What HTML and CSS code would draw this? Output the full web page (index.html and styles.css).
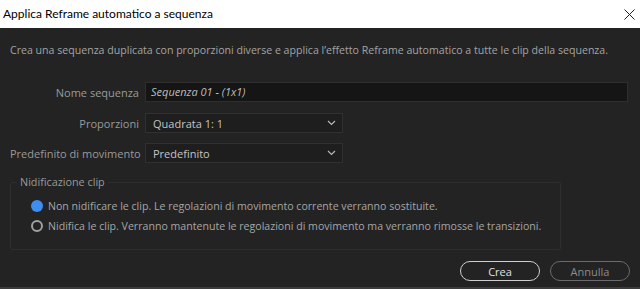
FILE: index.html
```html
<!DOCTYPE html>
<html lang="it">
<head>
<meta charset="utf-8">
<link rel="stylesheet" href="styles.css">
</head>
<body>
<div class="window">
  <div class="titlebar">
    <span class="title">Applica Reframe automatico a sequenza</span>
    <svg class="close" width="11" height="11" viewBox="0 0 11 11"><path d="M0.5 0.5 L10.5 10.5 M10.5 0.5 L0.5 10.5" stroke="#222" stroke-width="1" fill="none"/></svg>
  </div>
  <div class="body">
    <p class="desc">Crea una sequenza duplicata con proporzioni diverse e applica l’effetto Reframe automatico a tutte le clip della sequenza.</p>
    <div class="form">
      <div class="row">
        <span class="label">Nome sequenza</span>
        <div class="input">Sequenza 01 - (1x1)</div>
      </div>
      <div class="row">
        <span class="label">Proporzioni</span>
        <div class="select"><span>Quadrata 1: 1</span>
          <svg class="chev" width="9" height="6" viewBox="0 0 9 6"><path d="M1 1 L4.5 4.5 L8 1" stroke="#b8b8b8" stroke-width="1.2" fill="none"/></svg>
        </div>
      </div>
      <div class="row tight">
        <span class="label">Predefinito di movimento</span>
        <div class="select"><span>Predefinito</span>
          <svg class="chev" width="9" height="6" viewBox="0 0 9 6"><path d="M1 1 L4.5 4.5 L8 1" stroke="#b8b8b8" stroke-width="1.2" fill="none"/></svg>
        </div>
      </div>
    </div>
    <fieldset class="group">
      <legend>Nidificazione clip</legend>
      <div class="radio"><span class="dot on"></span>Non nidificare le clip. Le regolazioni di movimento corrente verranno sostituite.</div>
      <div class="radio"><span class="dot"></span>Nidifica le clip. Verranno mantenute le regolazioni di movimento ma verranno rimosse le transizioni.</div>
    </fieldset>
    <div class="buttons">
      <button class="btn primary">Crea</button>
      <button class="btn">Annulla</button>
    </div>
  </div>
</div>
</body>
</html>
```
FILE: styles.css
```css
html, body {
  margin: 0;
  padding: 0;
  background: #232323;
}
.window {
  width: 640px;
  height: 289px;
  display: flex;
  flex-direction: column;
  font-family: "Open Sans", "Noto Sans", sans-serif;
  overflow: hidden;
}
.titlebar {
  height: 28px;
  background: #ffffff;
  display: flex;
  align-items: center;
  justify-content: space-between;
  padding: 0 5px 0 3px;
  box-sizing: border-box;
  flex: none;
}
.title {
  font-family: "Lato", "Open Sans", sans-serif;
  font-size: 12px;
  color: #000;
  margin-top: -2px;
}
.body {
  flex: 1;
  background: #232323;
  border-bottom: 2px solid #3c3c3c;
  position: relative;
  padding: 0 10px;
}
.desc {
  margin: 14px 0 0 0;
  font-size: 10.6px;
  line-height: 16px;
  color: #a3a3a3;
  white-space: nowrap;
}
.form {
  margin-top: 24px;
  display: flex;
  flex-direction: column;
  gap: 11px;
}
.row {
  display: flex;
  align-items: center;
  height: 20px;
}
.row.tight {
  margin-top: -1px;
}
.label {
  width: 129px;
  text-align: right;
  margin-right: 6px;
  font-size: 11px;
  color: #9a9a9a;
  white-space: nowrap;
}
.input {
  width: 483px;
  height: 20px;
  box-sizing: border-box;
  background: #151515;
  border: 1px solid #2e2e2e;
  font-size: 11px;
  font-style: italic;
  color: #bdbdbd;
  padding-left: 5px;
  line-height: 18px;
}
.select {
  width: 198px;
  height: 20px;
  box-sizing: border-box;
  background: #1e1e1e;
  border: 1px solid #303030;
  font-size: 11px;
  color: #c4c4c4;
  padding: 0 6px 0 7px;
  display: flex;
  align-items: center;
  justify-content: space-between;
}
.group {
  margin: 12px 0 0 0;
  width: 551px;
  height: 75px;
  box-sizing: border-box;
  border: 1px solid #2e2e2e;
  border-radius: 2px;
  padding: 7px 0 0 6px;
}
.group legend {
  font-size: 10.8px;
  line-height: 14px;
  color: #9a9a9a;
  padding: 0 3px;
}
.radio {
  display: flex;
  align-items: center;
  height: 20px;
  margin-left: 14px;
  font-size: 10.6px;
  color: #a6a6a6;
  white-space: nowrap;
}
.dot {
  width: 12px;
  height: 12px;
  box-sizing: border-box;
  border-radius: 50%;
  border: 2px solid #a0a0a0;
  margin-right: 5px;
  flex: none;
}
.dot.on {
  border: none;
  background: #3e8ef0;
}
.buttons {
  position: absolute;
  right: 10px;
  bottom: 6px;
  display: flex;
  gap: 10px;
}
.btn {
  width: 80px;
  height: 20px;
  border-radius: 10px;
  background: transparent;
  border: 1px solid #6b6b6b;
  color: #8c8c8c;
  font-family: "Open Sans", "Noto Sans", sans-serif;
  font-size: 11px;
  padding: 0;
}
.btn.primary {
  border-color: #cfcfcf;
  color: #e0e0e0;
}
```
